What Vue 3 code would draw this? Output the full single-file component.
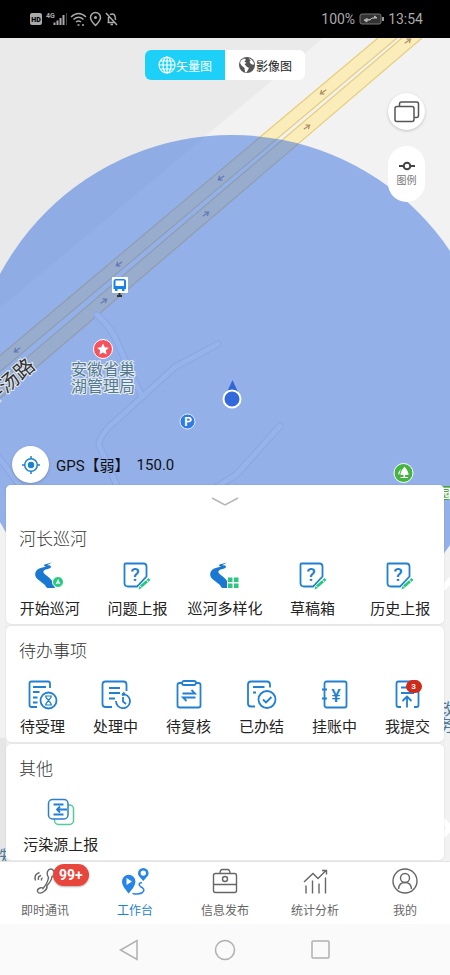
<template>
  <div class="app">
    <svg class="sprite" aria-hidden="true">
      <symbol id="i-river" viewBox="0 0 32 32">
        <path fill="#1b78d0" d="M18 2.500 10.500 4.500Q9 6 12 6.800 6 7.500 3 10C0 13 1 17 4 19.500L11 25Q12 28 13.500 28H21Q20 22 15 17.500C11 14 7 12.500 11 9.800Q17.500 8.500 17 6.500 16.500 5 13 5.300Z" />
      </symbol>
      <symbol id="i-start" viewBox="0 0 32 32">
        <use href="#i-river" width="32" height="32" />
        <circle cx="24" cy="22" r="5.500" fill="#2ac780" stroke="#fff" />
        <path d="M24 19 26.500 24.500 24 23.200 21.500 24.500Z" fill="#fff" />
      </symbol>
      <symbol id="i-multi" viewBox="0 0 32 32">
        <use href="#i-river" width="32" height="32" />
        <path d="M18 16H30V29H18Z" fill="#fff" />
        <path d="M19 17.500H23.500V22H19ZM25 17.500H29.500V22H25ZM19 23.500H23.500V28H19ZM25 23.500H29.500V28H25Z" fill="#2ac780" />
      </symbol>
      <symbol id="i-ask" viewBox="0 0 32 32">
        <path class="ln" d="M4.500 3.500H22.500Q25.500 3.500 25.500 6.500V16.500L16 26.500H7Q3.500 26.500 3.500 23V4.500Q3.500 3.500 4.500 3.500Z" />
        <text class="ask" x="14" y="21" text-anchor="middle">?</text>
        <path d="M20 26.500 28.500 19" stroke="#2ac780" stroke-width="3" />
        <path d="M17.500 29.500 18.500 26 21 28Z" fill="#2ac780" />
        <path d="M25.500 20 27.500 22.500" stroke="#fff" />
      </symbol>
      <symbol id="i-wait" viewBox="0 0 32 32">
        <path class="ln" d="M10 29H4.500Q2.500 29 2.500 27V5.500Q2.500 3.500 4.500 3.500H21Q23 3.500 23 5.500V10M6 9H19M6 14H12.500M6 19.500H10.500M6 24.500H10.500" />
        <circle class="ln" cx="21.500" cy="22.500" r="8" />
        <path class="th" d="M18 18H25M18 27H25M19 18V19.500L24 25.500V27M24 18V19.500L19 25.500V27" />
      </symbol>
      <symbol id="i-doing" viewBox="0 0 32 32">
        <path class="ln" d="M12 29H5.500Q2.500 29 2.500 26V6.500Q2.500 3.500 5.500 3.500H23.500Q26.500 3.500 26.500 6.500V13M9 10H20M9 15H20M9 20.500H15" />
        <path class="ln" d="M16 23A7 7 0 1 0 25 16.500L22 17M22 17 24.500 14.500M23 19V23.500L26 26" />
      </symbol>
      <symbol id="i-check" viewBox="0 0 32 32">
        <path class="ln" d="M9 5H6.500Q4.500 5 4.500 7V27.500Q4.500 29.500 6.500 29.500H25.500Q27.500 29.500 27.500 27.500V7Q27.500 5 25.500 5H23" />
        <rect class="ln" x="9" y="3" width="14" height="4" rx="2" />
        <path class="ln" d="M9.500 15.500H22L18.500 12M22.500 19.500H10L13.500 23" />
      </symbol>
      <symbol id="i-done" viewBox="0 0 32 32">
        <path class="ln" d="M9 28.500H5Q2 28.500 2 25.500V6.500Q2 3.500 5 3.500H21Q24 3.500 24 6.500V9.500M7 9H18.500M7 14.500H10" />
        <circle class="ln" cx="21" cy="21.500" r="8.500" />
        <path class="ln" d="M17 21.500 20 24.500 25.500 19" />
      </symbol>
      <symbol id="i-bill" viewBox="0 0 32 32">
        <rect class="ln" x="5.500" y="3.500" width="22" height="26" rx="2" />
        <path class="ln" d="M3 11.500H8M3 20.500H8" />
        <text class="yen" x="17" y="24" text-anchor="middle">¥</text>
      </symbol>
      <symbol id="i-submit" viewBox="0 0 32 32">
        <path class="ln" d="M9 29H6.500Q4.500 29 4.500 27V5.500Q4.500 3.500 6.500 3.500H24.500Q26.500 3.500 26.500 5.500V27Q26.500 29 24.500 29H22M9 9.500H16M9 15H22M15 29.500V19M10.500 23 15 18.500 19.500 23" />
      </symbol>
      <symbol id="i-source" viewBox="0 0 32 32">
        <rect x="9.500" y="9" width="19" height="19.500" rx="4" fill="none" stroke="#4bcf97" stroke-width="1.500" />
        <rect x="3.500" y="3.500" width="19.500" height="19.500" rx="4" fill="#fff" stroke="#2a7fd2" stroke-width="1.500" />
        <path class="ln" d="M8.500 8.500H18.500M8.500 18.500H18.500M22 13.500H12M15 10.500 12 13.500 15 16.500" />
      </symbol>
      <symbol id="i-phone" viewBox="0 0 32 32">
        <path class="gr" d="M20 4.500Q22.500 3 24.500 5.500L26 8Q26.500 10.500 23 11.500 22.500 16 18 20.500 18.500 24 15.500 26 10.500 30 8.500 26.500 8 24 11 23 13.500 22 14 23.500 19 17.500 19.500 12.500 16.500 8 20 4.500Z" />
        <path class="gr" d="M6.500 15.500Q4.500 9.500 10.500 7.500M9.500 15Q8.500 11.500 12 10.500M12.500 15.500Q12 13.500 13.500 13" />
      </symbol>
      <symbol id="i-work" viewBox="0 0 32 32">
        <path fill="#2585e8" d="M9.700 28.500C7 25 3 21 3 16.500A6.700 6.700 0 0 1 16.400 16.500C16.400 21 12.500 25 9.700 28.500Z" />
        <path d="M7.500 13 13 16.500 7.500 20Z" fill="#fff" />
        <path fill="#2585e8" fill-rule="evenodd" d="M24.300 16C22 13 19 11 19 8.200A5.300 5.300 0 0 1 29.600 8.200C29.600 11 26.500 13 24.300 16ZM24.300 10.800A2.700 2.700 0 1 0 24.300 5.400 2.700 2.700 0 0 0 24.300 10.800Z" />
        <path d="M23 17.500Q18 18.500 21.500 21.500 27 24.500 23.500 27.500 19.500 30 13.500 28.500" fill="none" stroke="#2585e8" stroke-width="1.500" />
      </symbol>
      <symbol id="i-news" viewBox="0 0 32 32">
        <rect class="gr" x="4.500" y="8.500" width="23" height="19" rx="2" />
        <path class="gr" d="M11 8.500Q11 4.500 13.500 4.500H18.500Q21 4.500 21 8.500M4.500 19.500H27.500" />
        <circle class="gr" cx="16" cy="14" r="2.500" />
      </symbol>
      <symbol id="i-stat" viewBox="0 0 32 32">
        <path class="gr" d="M7 20.500V28.500M13.500 15.500V28.500M20 18.500V28.500M26.500 12.500V28.500M5 17 14 8.500 19 13.500 27 5.500M23 5.500H27.500V9.500" />
      </symbol>
      <symbol id="i-me" viewBox="0 0 32 32">
        <circle class="gr" cx="16" cy="16" r="12" />
        <circle class="gr" cx="16" cy="13" r="4.500" />
        <path class="gr" d="M9.500 24Q10 17.500 16 17.500T22.500 24" />
      </symbol>
    </svg>

    <header class="status">
      <svg width="90" height="16" viewBox="0 0 90 16">
        <rect y="2" x="1" width="12" height="12" rx="2" fill="#aaa" />
        <text class="hd" x="7" y="11" text-anchor="middle">HD</text>
        <text class="net" x="17" y="7">4G</text>
        <path d="M25.500 14V11.500M28.500 14V9.500M31.500 14V7M34.500 14V4" stroke="#aaa" stroke-width="2" />
        <path d="M37.500 14V2" stroke="#444" />
        <path d="M42 6Q49.500 -1 57 6M44.500 8.500Q49.500 4 54.500 8.500M47 11Q49.500 9 52 11" class="sig" />
        <path d="M48.500 14H50.500M53 14H55" class="sig" />
        <path d="M66.500 14.500Q61.500 9.500 61.500 6.500A5 5 0 0 1 71.500 6.500Q71.500 9.500 66.500 14.500Z" class="sig" />
        <circle cx="66.500" cy="6.500" r="1.500" fill="#aaa" />
        <path d="M77 2 88 14M78.500 11.500H86M79.500 11V6M81 3.500Q86.500 1 86.500 9M81.500 13.500H84" class="sig" />
      </svg>
      <div class="power">
        <span>100%</span>
        <svg width="25" height="12" viewBox="0 0 25 12">
          <rect x="1" y="1" width="21" height="10" rx="2" fill="#333" stroke="#777" />
          <path d="M24 4V8" stroke="#999" stroke-width="2" />
          <path d="M5 7H11L13 5H18L15.500 3V5M8 5V9L5 7" fill="#bbb" stroke="#bbb" />
        </svg>
        <span>13:54</span>
      </div>
    </header>

    <main class="stage">
      <svg class="map" viewBox="0 0 450 823" preserveAspectRatio="xMidYMin slice">
        <rect width="450" height="823" fill="#f2f2f2" />
        <path d="M0 0H323L0 270Z" fill="#eaeaea" />
        <path d="M0 700H12V823H0Z" fill="#e6e6e6" />
        <path d="M378 0H397L-10 342V326ZM402 0H422L-10 369V351Z" fill="#fbedba" />
        <path d="M378 0-10 326M397 0-10 342M402 0-10 351M422 0-10 369" class="kerb" />
        <path v-for="line in lanes" :key="line" :d="line" class="lane-edge" />
        <path v-for="line in lanes" :key="line + 'in'" :d="line" class="lane" />
        <path d="M440 553 455 538M440 800 455 785M440 780 455 795" stroke="#fff" stroke-width="6" />
        <circle cx="232" cy="360" r="263" fill="#366ee0" fill-opacity="0.5" />
        <path
          v-for="a in arrows"
          :key="a.x"
          :transform="`translate(${a.x} ${a.y}) rotate(${a.back ? 145 : -35})`"
          d="M-4 0H4M0 -2.500 3 0 0 2.500"
          :stroke="a.fill"
          stroke-width="1.200"
          fill="none"
        />
        <g>
          <rect x="112" y="239" width="16" height="16" rx="1" fill="#fff" />
          <path d="M113.500 243.500Q113.500 241 116 241H123.500Q126 241 126 243.500V251H124.500V253H122V251H117.500V253H115V251H113.500Z" fill="#1683ea" />
          <path d="M115.500 242.500H124V248H115.500Z" fill="#fff" />
          <path d="M119.500 255V258M117 258H122" stroke="#333" stroke-width="2" />
        </g>
        <circle cx="103" cy="311" r="9.500" fill="#f4525c" stroke="#fff" />
        <path d="M103 305.500 104.800 309.200 108.800 309.700 105.900 312.500 106.600 316.500 103 314.600 99.400 316.500 100.100 312.500 97.200 309.700 101.200 309.200Z" fill="#fff" />
        <text class="place" x="103" y="337" text-anchor="middle">安徽省巢</text>
        <text class="place" x="103" y="354" text-anchor="middle">湖管理局</text>
        <text class="road" transform="translate(-9 369) rotate(-41)">半汤路</text>
        <circle cx="187.500" cy="383.500" r="7.500" fill="#2f7be8" stroke="#e4f0ff" />
        <text class="park" x="188" y="388" text-anchor="middle">P</text>
        <path d="M232.500 342 238 354H227Z" fill="#3465d4" />
        <circle cx="232" cy="361" r="8.500" fill="#3469dc" stroke="#fff" stroke-width="2" />
        <circle cx="403.500" cy="435" r="9.500" fill="#45b53f" stroke="#fff" />
        <path d="M404.500 428.500Q409 434 408.500 437H405V439H408V440H400.500V439H403.500V437H400.500Q400 434 404.500 428.500ZM401 431Q397 435 399 437" fill="#fff" />
        <rect x="436" y="448" width="18" height="14" fill="#4ba543" />
        <text class="park" x="445" y="460" text-anchor="middle">园</text>
        <text class="place" x="438" y="677">政</text>
        <text class="place" x="438" y="693">务</text>
        <text class="place" x="-7" y="824">铁</text>
      </svg>

      <div class="switch">
        <button :class="{ on: layer === 'vector' }" @click="layer = 'vector'">
          <svg width="18" height="18" viewBox="0 0 18 18" fill="none" stroke="currentColor" stroke-width="1.200">
            <circle cx="9" cy="9" r="8" />
            <ellipse cx="9" cy="9" rx="4" ry="8" />
            <path d="M9 1V17M1 9H17M2.500 5H15.500M2.500 13H15.500" />
          </svg>
          矢量图
        </button>
        <button :class="{ on: layer === 'image' }" @click="layer = 'image'">
          <svg width="18" height="18" viewBox="0 0 18 18">
            <circle cx="9" cy="9" r="8" fill="#555" />
            <path d="M3 4.500 6 2.500 8 3.500 6.500 5.500 8.500 7 6.500 8 8.500 10.500 11 12 8.500 16.500 7 16 6.500 12 3.500 9.500 2 7ZM10.500 2 14 4 16 7 15.500 9 13 8 11.500 6 12.500 4.500Z" fill="#fff" />
          </svg>
          影像图
        </button>
      </div>

      <div class="tools">
        <button class="round" aria-label="图层">
          <svg width="26" height="22" viewBox="0 0 26 22" fill="none" stroke="#555" stroke-width="1.500">
            <rect x="1" y="5.500" width="19" height="15" rx="2" />
            <path d="M5.500 5V3Q5.500 1 7.500 1H22.500Q24.500 1 24.500 3V14.500Q24.500 16.500 22.500 16.500H20.500" />
          </svg>
        </button>
        <button class="legend">
          <svg width="16" height="10" viewBox="0 0 16 10" fill="none" stroke="#444" stroke-width="2">
            <circle cx="8" cy="5" r="3.300" />
            <path d="M0 5H4.500M11.500 5H16" />
          </svg>
          图例
        </button>
      </div>

      <div class="gps">
        <button class="round" aria-label="定位">
          <svg width="18" height="18" viewBox="0 0 18 18" fill="none" stroke="#1b82cf" stroke-width="1.500">
            <circle cx="9" cy="9" r="6.300" />
            <circle cx="9" cy="9" r="3.200" fill="#1b82cf" stroke="none" />
            <path d="M9 0V3M9 15V18M0 9H3M15 9H18" />
          </svg>
        </button>
        <span>GPS【弱】</span>
        <span>150.0</span>
      </div>

      <div class="panel">
        <section v-for="group in groups" :key="group.title" class="card" :class="group.kind">
          <button v-if="group.kind === 'patrol'" class="fold" aria-label="收起">
            <svg width="28" height="10" viewBox="0 0 28 10" fill="none" stroke="#b5b5b5" stroke-width="1.500">
              <path d="M1 1 14 8 27 1" />
            </svg>
          </button>
          <h2>{{ group.title }}</h2>
          <div class="grid">
            <button v-for="item in group.items" :key="item.label" class="item">
              <span class="pic">
                <svg width="32" height="32"><use :href="'#i-' + item.icon" /></svg>
                <b v-if="item.count" class="dot">{{ item.count }}</b>
              </span>
              {{ item.label }}
            </button>
          </div>
        </section>
      </div>
    </main>

    <nav class="tabs">
      <button
        v-for="tab in tabs"
        :key="tab.icon"
        class="tab"
        :class="{ active: tab.icon === current }"
        @click="current = tab.icon"
      >
        <span class="pic">
          <svg width="32" height="32"><use :href="'#i-' + tab.icon" /></svg>
          <b v-if="tab.count" class="badge">{{ tab.count }}</b>
        </span>
        {{ tab.label }}
      </button>
    </nav>

    <div class="keys">
      <button aria-label="返回">
        <svg width="22" height="22" viewBox="0 0 22 22"><path d="M19 1.500V20.500L2.500 11Z" /></svg>
      </button>
      <button aria-label="主页">
        <svg width="22" height="22" viewBox="0 0 22 22"><circle cx="11" cy="11" r="9.500" /></svg>
      </button>
      <button aria-label="最近">
        <svg width="22" height="22" viewBox="0 0 22 22"><rect x="2" y="2" width="17" height="17" rx="1" /></svg>
      </button>
    </div>
  </div>
</template>

<script setup>
import { ref } from 'vue'

const layer = ref('vector')
const current = ref('work')

const groups = [
  {
    title: '河长巡河',
    kind: 'patrol',
    items: [
      { icon: 'start', label: '开始巡河' },
      { icon: 'ask', label: '问题上报' },
      { icon: 'multi', label: '巡河多样化' },
      { icon: 'ask', label: '草稿箱' },
      { icon: 'ask', label: '历史上报' }
    ]
  },
  {
    title: '待办事项',
    kind: 'todo',
    items: [
      { icon: 'wait', label: '待受理' },
      { icon: 'doing', label: '处理中' },
      { icon: 'check', label: '待复核' },
      { icon: 'done', label: '已办结' },
      { icon: 'bill', label: '挂账中' },
      { icon: 'submit', label: '我提交', count: 3 }
    ]
  },
  {
    title: '其他',
    kind: 'other',
    items: [{ icon: 'source', label: '污染源上报' }]
  }
]

const tabs = [
  { icon: 'phone', label: '即时通讯', count: '99+' },
  { icon: 'work', label: '工作台' },
  { icon: 'news', label: '信息发布' },
  { icon: 'stat', label: '统计分析' },
  { icon: 'me', label: '我的' }
]

// small footpaths under the accuracy circle
const lanes = [
  'M97 277Q112 290 118 306L142 359',
  'M218 306L175 329L142 359L108 390Q98 402 99 407L120 455',
  'M280 388L237 436L212 452',
  'M-4 416L22 450'
]

const arrows = [
  { x: 408, y: 3, fill: '#b08f70' },
  { x: 323, y: 54, fill: '#b08f70', back: true },
  { x: 307, y: 89, fill: '#b08f70' },
  { x: 221, y: 140, fill: '#6578b4', back: true },
  { x: 206, y: 176, fill: '#6578b4' },
  { x: 119, y: 226, fill: '#6578b4', back: true },
  { x: 104, y: 263, fill: '#6578b4' },
  { x: 17, y: 312, fill: '#6578b4', back: true }
]
</script>

<style>
body {
  margin: 0;
}
</style>

<style scoped>
.app {
  display: flex;
  flex-direction: column;
  min-height: 100vh;
  font-family: Roboto, 'Noto Sans CJK SC', sans-serif;
  color: #222;
}

button {
  padding: 0;
  border: 0;
  background: none;
  font: inherit;
  color: inherit;
  cursor: pointer;
}

svg {
  display: block;
}

.sprite {
  position: absolute;
  width: 0;
  height: 0;
}

.ln,
.th {
  fill: none;
  stroke: #2180d2;
  stroke-width: 1.8;
}

.th {
  stroke-width: 1.2;
}

.gr {
  fill: none;
  stroke: #666;
  stroke-width: 1.4;
}

.ask,
.yen {
  fill: #2180d2;
  font-size: 19px;
  font-weight: 500;
}

.yen {
  font-size: 18px;
}

.status {
  display: flex;
  align-items: center;
  justify-content: space-between;
  height: 38px;
  padding: 0 27px 0 29px;
  background: #000;
  color: #aaa;
}

.power {
  display: flex;
  align-items: center;
  gap: 4px;
  font-size: 14px;
}

.hd {
  font-size: 7px;
  font-weight: 900;
  fill: #000;
}

.net {
  font-size: 7px;
  font-weight: 700;
  fill: #aaa;
}

.sig {
  fill: none;
  stroke: #aaa;
  stroke-width: 1.5;
}

.stage {
  position: relative;
  display: flex;
  flex: 1;
  flex-direction: column;
  overflow: hidden;
}

.map {
  position: absolute;
  inset: 0;
  width: 100%;
  height: 100%;
}

.kerb {
  fill: none;
  stroke: #e6cf80;
  stroke-width: 1.3;
}

.lane-edge,
.lane {
  fill: none;
  stroke: #dcdfe6;
  stroke-width: 7;
  stroke-linecap: round;
}

.lane {
  stroke: #f8f8f8;
  stroke-width: 5;
}

.place,
.road {
  font-size: 16px;
  fill: #54788c;
  stroke: #e4ecf6;
  stroke-width: 2;
  paint-order: stroke;
}

.road {
  font-size: 20px;
  fill: #333;
}

.park {
  font-size: 12px;
  font-weight: 700;
  fill: #fff;
}

.switch,
.tools,
.gps,
.panel {
  position: relative;
}

.switch {
  display: flex;
  align-self: center;
  margin-top: 12px;
  border-radius: 6px;
  background: #fff;
  overflow: hidden;
}

.switch button {
  display: flex;
  align-items: center;
  justify-content: center;
  width: 80px;
  height: 30px;
  font-size: 12px;
}

.switch .on {
  background: #1dd0f8;
  color: #fff;
}

.tools {
  display: flex;
  flex-direction: column;
  align-self: flex-end;
  gap: 16px;
  margin: 13px 25px 16px 0;
}

.round {
  display: flex;
  align-items: center;
  justify-content: center;
  width: 37px;
  height: 37px;
  border-radius: 50%;
  background: #fff;
  box-shadow: 0 1px 3px rgba(0, 0, 0, 0.2);
}

.legend {
  display: flex;
  flex-direction: column;
  align-items: center;
  justify-content: center;
  gap: 3px;
  width: 37px;
  height: 56px;
  border-radius: 19px;
  background: #fff;
  font-size: 10px;
  line-height: 14px;
  color: #777;
}

.gps {
  display: flex;
  align-items: center;
  gap: 7px;
  margin: auto 0 2px 12px;
  font-size: 15px;
  color: #111;
}

.panel {
  display: flex;
  flex-direction: column;
  gap: 2px;
  margin: 0 6px;
  padding-bottom: 1px;
  border-radius: 5px;
  background: #f0f0f0;
}

.card {
  padding: 13px 0 5px;
  border-radius: 5px;
  background: #fff;
  box-shadow: 0 0 2px rgba(0, 0, 0, 0.12);
}

.fold {
  display: flex;
  align-items: center;
  justify-content: center;
  width: 100%;
  height: 33px;
}

h2 {
  margin: 0 13px 15px;
  font-size: 17px;
  font-weight: 300;
  line-height: 24px;
  color: #333;
}

.patrol {
  padding-top: 0;
}

.patrol h2 {
  margin-top: 9px;
  margin-bottom: 9px;
}

.grid {
  display: grid;
  grid-template-columns: repeat(5, 1fr);
}

.todo .grid {
  grid-template-columns: repeat(6, 1fr);
}

.other .grid {
  grid-template-columns: repeat(4, 1fr);
}

.item {
  display: flex;
  flex-direction: column;
  align-items: center;
  gap: 7px;
  font-size: 15px;
  line-height: 20px;
  white-space: nowrap;
}

.pic {
  position: relative;
}

.dot {
  position: absolute;
  top: 2px;
  left: 14px;
  width: 16px;
  border-radius: 7px;
  background: #cf2a1a;
  font-size: 8px;
  line-height: 13px;
  color: #fff;
}

.tabs {
  display: grid;
  grid-template-columns: repeat(5, 1fr);
  border-top: 1px solid #e4e4e4;
  background: #fff;
}

.tab {
  display: flex;
  flex-direction: column;
  align-items: center;
  gap: 4px;
  padding: 3px 0;
  font-size: 12px;
  line-height: 20px;
  color: #666;
}

.tab.active {
  color: #1b82cf;
}

.badge {
  position: absolute;
  top: -1px;
  left: 24px;
  padding: 0 6px;
  border-radius: 12px;
  background: #e8453c;
  box-shadow: 0 1px 2px rgba(0, 0, 0, 0.3);
  font-size: 14px;
  line-height: 22px;
  color: #fff;
}

.keys {
  display: flex;
  align-items: center;
  justify-content: center;
  gap: 74px;
  height: 51px;
  background: #fafafa;
}

.keys svg {
  fill: none;
  stroke: #b0b0b0;
  stroke-width: 1.5;
}
</style>
